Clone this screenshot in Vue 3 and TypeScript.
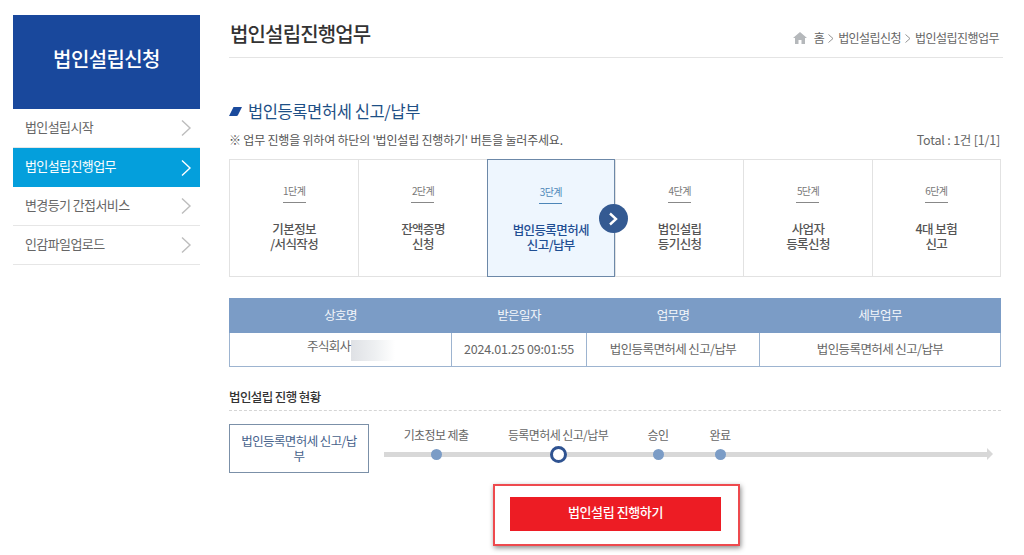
<script setup lang="ts">
interface Step {
  no: string
  lines: string[]
  active?: boolean
}

const menus = [
  { name: '법인설립시작', active: false },
  { name: '법인설립진행업무', active: true },
  { name: '변경등기 간접서비스', active: false },
  { name: '인감파일업로드', active: false }
]

const steps: Step[] = [
  { no: '1단계', lines: ['기본정보', '/서식작성'] },
  { no: '2단계', lines: ['잔액증명', '신청'] },
  { no: '3단계', lines: ['법인등록면허세', '신고/납부'], active: true },
  { no: '4단계', lines: ['법인설립', '등기신청'] },
  { no: '5단계', lines: ['사업자', '등록신청'] },
  { no: '6단계', lines: ['4대 보험', '신고'] }
]

const nodes = [
  { name: '기초정보 제출', cls: 'node-a', current: false },
  { name: '등록면허세 신고/납부', cls: 'node-b', current: true },
  { name: '승인', cls: 'node-c', current: false },
  { name: '완료', cls: 'node-d', current: false }
]
</script>

<template>
  <div class="page">
    <aside class="side">
      <div class="side-title">법인설립신청</div>
      <ul class="menu">
        <li v-for="m in menus" :key="m.name" class="menu-item" :class="{ on: m.active }">
          <span>{{ m.name }}</span>
          <svg width="12" height="18" viewBox="0 0 12 18" fill="none">
            <path d="M2 1.5 L10 9 L2 16.5" stroke="currentColor" stroke-width="1.4" />
          </svg>
        </li>
      </ul>
    </aside>

    <main class="main">
      <header class="head">
        <h1>법인설립진행업무</h1>
        <div class="crumb">
          <svg width="14" height="12" viewBox="0 0 14 12">
            <path d="M7 0 L14 6 L12 6 L12 12 L8.5 12 L8.5 8 L5.5 8 L5.5 12 L2 12 L2 6 L0 6 Z" fill="#b5b8bb" />
          </svg>
          <span class="crumb-home">홈</span>
          <svg class="gt" width="6" height="9" viewBox="0 0 6 9" fill="none">
            <path d="M0.5 0.5 L5 4.5 L0.5 8.5" stroke="#888" stroke-width="0.9" />
          </svg>
          <span>법인설립신청</span>
          <svg class="gt" width="6" height="9" viewBox="0 0 6 9" fill="none">
            <path d="M0.5 0.5 L5 4.5 L0.5 8.5" stroke="#888" stroke-width="0.9" />
          </svg>
          <span>법인설립진행업무</span>
        </div>
      </header>

      <h2 class="sec-title">
        <svg width="13" height="9" viewBox="0 0 13 9">
          <path d="M4.5 0 L13 0 L9 8 Q8.6 9 7.5 9 L0 9 Z" fill="#1a4a9c" />
        </svg>
        법인등록면허세 신고/납부
      </h2>

      <div class="note-row">
        <span>※ 업무 진행을 위하여 하단의 '법인설립 진행하기' 버튼을 눌러주세요.</span>
        <span class="total">Total : 1건 [1/1]</span>
      </div>

      <ol class="steps">
        <li v-for="s in steps" :key="s.no" class="step" :class="{ on: s.active }">
          <span class="step-no">{{ s.no }}</span>
          <i class="step-bar"></i>
          <strong class="step-name">
            <span v-for="l in s.lines" :key="l">{{ l }}</span>
          </strong>
          <span v-if="s.active" class="step-arrow">
            <svg width="12" height="14" viewBox="0 0 12 14" fill="none">
              <path d="M3 1.5 L9 7 L3 12.5" stroke="#fff" stroke-width="2.4" />
            </svg>
          </span>
        </li>
      </ol>

      <table class="info">
        <colgroup>
          <col class="col-a" />
          <col class="col-b" />
          <col class="col-c" />
          <col />
        </colgroup>
        <thead>
          <tr>
            <th>상호명</th>
            <th>받은일자</th>
            <th>업무명</th>
            <th>세부업무</th>
          </tr>
        </thead>
        <tbody>
          <tr>
            <td class="company"><span>주식회사</span><i class="blur"></i></td>
            <td>2024.01.25 09:01:55</td>
            <td>법인등록면허세 신고/납부</td>
            <td>법인등록면허세 신고/납부</td>
          </tr>
        </tbody>
      </table>

      <h3 class="status-title">법인설립 진행 현황</h3>

      <div class="status">
        <div class="status-box">법인등록면허세 신고/납부</div>
        <div class="track">
          <div class="track-line"></div>
          <div v-for="n in nodes" :key="n.name" class="node" :class="n.cls">
            <span class="node-name">{{ n.name }}</span>
            <i class="dot" :class="{ current: n.current }"></i>
          </div>
        </div>
      </div>

      <div class="btn-row">
        <div class="mark">
          <button class="go" type="button">법인설립 진행하기</button>
        </div>
      </div>
    </main>
  </div>
</template>

<style>
html,
body {
  margin: 0;
  background: #fff;
}
</style>

<style scoped>
.page {
  display: flex;
  width: 1024px;
  height: 555px;
  overflow: hidden;
  padding: 15px 0 0 13px;
  box-sizing: border-box;
  gap: 29px;
  font-family: "Noto Sans CJK KR", "Liberation Sans", sans-serif;
  color: #555;
  letter-spacing: -0.6px;
}

.side {
  width: 187px;
  flex: none;
}

.side-title {
  height: 94px;
  box-sizing: border-box;
  padding-bottom: 8px;
  display: flex;
  align-items: center;
  justify-content: center;
  background: #19489c;
  color: #fff;
  font-size: 20px;
  font-weight: 500;
}

.menu {
  list-style: none;
  margin: 0;
  padding: 0;
}

.menu-item {
  display: flex;
  align-items: center;
  justify-content: space-between;
  height: 39px;
  box-sizing: border-box;
  padding: 0 8px 0 12px;
  border-bottom: 1px solid #e6e6e6;
  font-size: 13px;
  color: #666;
}

.menu-item span {
  padding-bottom: 4px;
}

.menu-item svg {
  color: #bdbdbd;
}

.menu-item.on {
  background: #049fdc;
  border-bottom: 0;
  color: #fff;
}

.menu-item.on svg {
  color: #fff;
}

.main {
  width: 774px;
  flex: none;
}

.head {
  display: flex;
  justify-content: space-between;
  align-items: flex-end;
  height: 43px;
  box-sizing: border-box;
  border-bottom: 1px solid #e4e4e4;
  padding: 0 4px 11px 1px;
}

.head h1 {
  margin: 0;
  align-self: flex-start;
  font-size: 20px;
  line-height: 38px;
  font-weight: 500;
  letter-spacing: -0.85px;
  color: #333;
}

.crumb {
  display: flex;
  align-items: center;
  font-size: 12px;
  line-height: 16px;
  letter-spacing: -0.55px;
  color: #666;
}

.crumb-home {
  margin-left: 7px;
}

.gt {
  margin: 1px 4px 0;
}

.sec-title {
  display: flex;
  align-items: center;
  gap: 6px;
  margin: 41px 0 0;
  font-size: 16.5px;
  line-height: 24px;
  font-weight: 400;
  letter-spacing: -0.4px;
  color: #1e4f86;
}

.note-row {
  display: flex;
  justify-content: space-between;
  align-items: center;
  height: 20px;
  margin-top: 6px;
  padding-right: 3px;
  font-size: 12px;
  letter-spacing: -0.2px;
  color: #555;
}

.total {
  font-size: 12.5px;
  color: #666;
}

.steps {
  display: grid;
  grid-template-columns: repeat(6, 1fr);
  width: 772px;
  height: 118px;
  box-sizing: border-box;
  list-style: none;
  margin: 10px 0 0;
  padding: 0;
  border: 1px solid #e2e2e2;
}

.step {
  position: relative;
  display: flex;
  flex-direction: column;
  align-items: center;
  padding-top: 23px;
  border-left: 1px solid #e2e2e2;
  box-sizing: border-box;
}

.step:first-child {
  border-left: 0;
}

.step.on {
  margin: -1px 0;
  padding-top: 24px;
  border: 1px solid #6c88a8;
  background: #eef6fe;
}

.step-no {
  font-size: 10px;
  line-height: 16px;
  color: #777;
}

.step-bar {
  width: 23px;
  height: 1px;
  margin-top: 3px;
  background: #888;
}

.step-name {
  display: flex;
  flex-direction: column;
  align-items: center;
  margin-top: 18px;
  font-size: 12.5px;
  line-height: 15px;
  font-weight: 500;
  color: #555;
}

.on .step-no {
  color: #4d86b8;
}

.on .step-bar {
  background: #4d86b8;
}

.on .step-name {
  color: #1f4e93;
}

.step-arrow {
  position: absolute;
  top: 44px;
  right: -14px;
  z-index: 1;
  width: 29px;
  height: 29px;
  display: flex;
  align-items: center;
  justify-content: center;
  border-radius: 50%;
  background: #345a92;
}

.info {
  width: 772px;
  margin-top: 21px;
  border-collapse: collapse;
  table-layout: fixed;
  font-size: 12.5px;
}

.col-a {
  width: 222px;
}

.col-b {
  width: 135px;
}

.col-c {
  width: 173px;
}

.info th {
  height: 30px;
  padding: 0 0 3px;
  background: #7b9cc6;
  color: #f4f7fb;
  font-weight: 400;
  border: 1px solid #7b9cc6;
}

.info td {
  height: 30px;
  padding: 0 0 3px;
  text-align: center;
  color: #666;
  border: 1px solid #9db4d0;
}

.info td:nth-child(2) {
  letter-spacing: -0.2px;
}

.info .company {
  padding-left: 34px;
  padding-bottom: 0;
  text-align: left;
}

.company span {
  position: relative;
  top: -2px;
  margin-left: 43px;
}

.blur {
  display: inline-block;
  width: 44px;
  height: 21px;
  vertical-align: middle;
  background: linear-gradient(90deg, #dfe1e5, #eef0f2 55%, #fff);
}

.status-title {
  margin: 21px 0 0;
  padding-bottom: 4px;
  font-size: 12.5px;
  line-height: 18px;
  font-weight: 500;
  color: #333;
  width: 772px;
  border-bottom: 1px dashed #d5d5d5;
}

.status {
  display: flex;
  gap: 15px;
  margin-top: 13px;
}

.status-box {
  width: 140px;
  height: 49px;
  flex: none;
  box-sizing: border-box;
  display: flex;
  align-items: center;
  text-align: center;
  padding: 0 10px 2px;
  border: 1px solid #7b90a8;
  font-size: 12.5px;
  line-height: 15px;
  color: #46628c;
}

.track {
  position: relative;
  width: 609px;
  height: 49px;
}

.track-line {
  position: absolute;
  left: 0;
  right: 6px;
  top: 28px;
  height: 5px;
  background: #d8d8d8;
}

.track-line::after {
  content: "";
  position: absolute;
  right: -6px;
  top: -4px;
  border-left: 6px solid #d8d8d8;
  border-top: 6.5px solid transparent;
  border-bottom: 6.5px solid transparent;
}

.node {
  position: absolute;
  top: 0;
  width: 130px;
  display: flex;
  flex-direction: column;
  align-items: center;
}

.node-a { left: -13px; }
.node-b { left: 109px; }
.node-c { left: 209px; }
.node-d { left: 271px; }

.node-name {
  height: 23px;
  font-size: 12px;
  line-height: 22px;
  color: #666;
  white-space: nowrap;
}

.dot {
  position: relative;
  width: 11px;
  height: 11px;
  margin-top: 2px;
  border-radius: 50%;
  background: #7b9cc6;
}

.dot.current {
  width: 17px;
  height: 17px;
  margin-top: -1px;
  box-sizing: border-box;
  border: 3px solid #2f5391;
  background: #fff;
}

.btn-row {
  margin-top: 11px;
  padding-left: 264px;
}

.mark {
  width: 247px;
  height: 62px;
  box-sizing: border-box;
  display: flex;
  align-items: center;
  padding: 0 0 2px 15px;
  border: 2px solid #ee4a4e;
  box-shadow: 1px 2px 5px rgba(0, 0, 0, 0.45);
}

.go {
  width: 211px;
  height: 34px;
  padding: 0 0 5px;
  border: 0;
  background: #ed1c24;
  color: #fff;
  font-family: inherit;
  font-size: 13px;
  font-weight: 500;
  letter-spacing: -0.4px;
}
</style>
